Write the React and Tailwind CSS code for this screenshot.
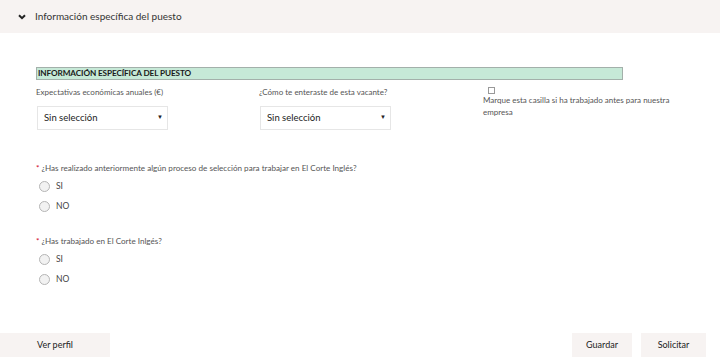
import React from 'react'

function Select({ className }) {
    return (
        <div className={`flex items-center justify-between h-[24px] w-[131px] border border-[#e6e6e6] bg-white pl-[6px] pr-[4px] text-[9.5px] text-[#222] ${className || ''}`}>
            <span>Sin selección</span>
            <span className="text-[6px] leading-none mb-[2px]">▼</span>
        </div>
    )
}

function Radio({ label }) {
    return (
        <div className="flex items-center gap-[6px] h-[20px]">
            <span className="w-[11px] h-[11px] rounded-full border border-[#b5b5b5] bg-[#f2f2f2]" />
            <span className="text-[8.5px] text-[#444]">{label}</span>
        </div>
    )
}

function Question({ text }) {
    return (
        <div className="pl-[36px]">
            <div className="text-[8.1px] text-[#555] h-[12px] leading-[12px]">
                <span className="text-[#d0021b]">* </span>{text}
            </div>
            <div className="pl-[3px] mt-[2px]">
                <Radio label="SI" />
                <Radio label="NO" />
            </div>
        </div>
    )
}

export default function App() {
    return (
        <div className="w-[720px] h-[364px] bg-white flex flex-col" style={{ fontFamily: 'Lato, "Open Sans", sans-serif' }}>
            <div className="h-[33px] bg-[#f7f3f2] flex items-center pl-[18px] gap-[9px] shrink-0">
                <svg width="8" height="6" viewBox="0 0 8 6"><path d="M1 1.2 L4 4.2 L7 1.2" stroke="#222" strokeWidth="2" fill="none" /></svg>
                <span className="text-[10px] text-[#333]">Información específica del puesto</span>
            </div>

            <div className="mt-[34px] ml-[36px] w-[587px] h-[13px] bg-[#c6e9d7] border border-[#a3b0aa] flex items-center pl-[1px]">
                <span className="text-[8.2px] font-bold text-[#1a1a1a] tracking-[-0.1px]">INFORMACIÓN ESPECÍFICA DEL PUESTO</span>
            </div>

            <div className="flex mt-[6px] pl-[36px]">
                <div className="w-[223px]">
                    <div className="text-[8px] text-[#555] h-[12px] leading-[12px]">Expectativas económicas anuales (€)</div>
                    <Select className="mt-[8px] ml-[1px]" />
                </div>
                <div className="w-[224px]">
                    <div className="text-[8px] text-[#555] h-[12px] leading-[12px]">¿Cómo te enteraste de esta vacante?</div>
                    <Select className="mt-[8px] ml-[1px]" />
                </div>
                <div className="mt-[1px]">
                    <div className="ml-[5px] w-[7px] h-[7px] border border-[#999] bg-white" />
                    <div className="text-[8px] text-[#555] leading-[12px] w-[200px]">
                        Marque esta casilla si ha trabajado antes para nuestra empresa
                    </div>
                </div>
            </div>

            <div className="mt-[32px]">
                <Question text="¿Has realizado anteriormente algún proceso de selección para trabajar en El Corte Inglés?" />
            </div>
            <div className="mt-[19px]">
                <Question text="¿Has trabajado en El Corte Inlgés?" />
            </div>

            <div className="mt-auto mb-[7px] flex items-center">
                <div className="w-[110px] h-[24px] bg-[#f7f3f2] flex items-center justify-center text-[9px] text-[#222]">Ver perfil</div>
                <div className="flex-1" />
                <div className="w-[60px] h-[24px] bg-[#f7f3f2] flex items-center justify-center text-[9px] text-[#222]">Guardar</div>
                <div className="w-[65px] h-[24px] bg-[#f7f3f2] flex items-center justify-center text-[9px] text-[#222] ml-[9px] mr-[14px]">Solicitar</div>
            </div>
        </div>
    )
}
